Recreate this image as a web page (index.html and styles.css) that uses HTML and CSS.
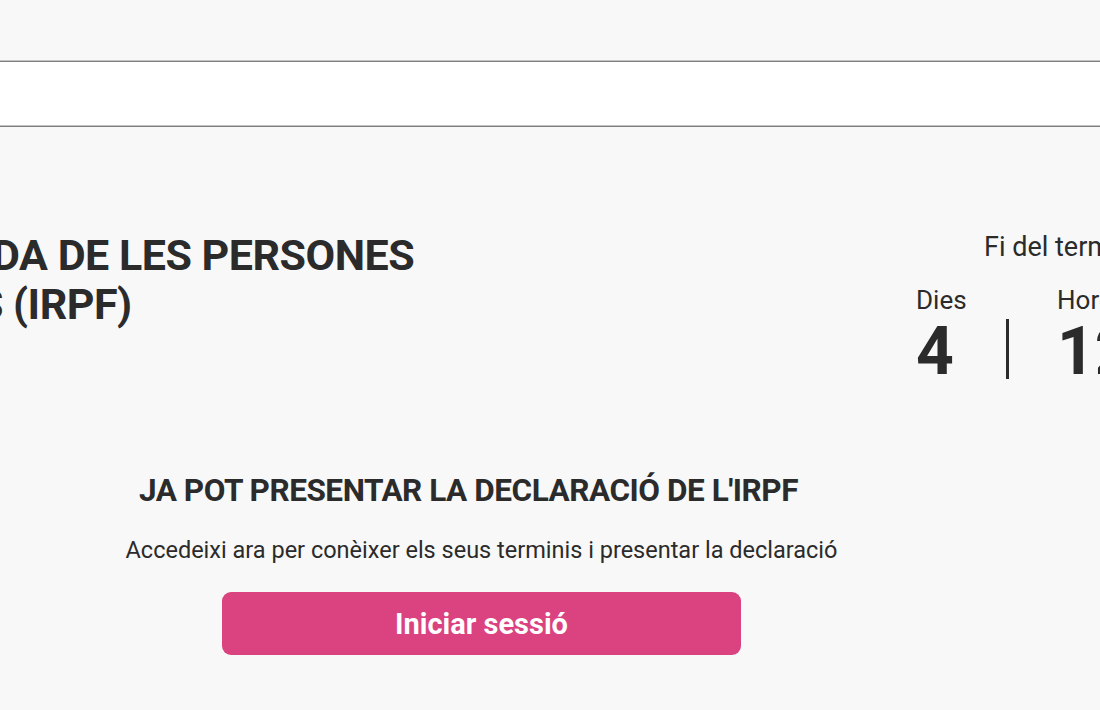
FILE: index.html
```html
<!DOCTYPE html>
<html lang="ca">
<head>
<meta charset="utf-8">
<title>IRPF</title>
<link rel="stylesheet" href="styles.css">
</head>
<body>
<header class="topbar"></header>
<nav class="navband"><div class="navinner"></div></nav>
<main class="stage">
  <section class="hero">
    <h1 class="title">IMPOST SOBRE LA RENDA DE LES PERSONES<br>FÍSIQUES (IRPF)</h1>
    <div class="countdown">
      <div class="cd-head">Fi del termini</div>
      <div class="cd-units">
        <div class="unit"><span class="u-label">Dies</span><span class="u-num">4</span></div>
        <div class="sep"></div>
        <div class="unit"><span class="u-label">Hores</span><span class="u-num">12</span></div>
        <div class="sep"></div>
        <div class="unit"><span class="u-label">Minuts</span><span class="u-num">30</span></div>
      </div>
    </div>
  </section>
  <section class="cta">
    <h2 class="cta-title">JA POT PRESENTAR LA DECLARACIÓ DE L'IRPF</h2>
    <p class="cta-text">Accedeixi ara per conèixer els seus terminis i presentar la declaració</p>
    <a class="btn" href="#">Iniciar sessió</a>
  </section>
</main>
</body>
</html>
```
FILE: styles.css
```css
html, body {
  margin: 0;
  padding: 0;
}
body {
  background: #f8f8f8;
  color: #2b2b2b;
  font-family: Roboto, "Noto Sans", sans-serif;
  overflow: hidden;
  width: 1100px;
  height: 710px;
}
.topbar {
  height: 60px;
}
.navband {
  border-top: 1px solid #c2c2c2;
  border-bottom: 1px solid #7e7e7e;
}
.navinner {
  background: #fff;
  height: 63px;
  border-top: 1px solid #7e7e7e;
  border-bottom: 1px solid #c2c2c2;
}
.stage {
  width: 1763px;
  margin-left: -400px;
}
.hero {
  display: grid;
  grid-template-columns: 1316px 1fr;
  padding-top: 104px;
}
.title {
  margin: 0;
  font-size: 43px;
  line-height: 49px;
  font-weight: 700;
  letter-spacing: -0.5px;
  padding-left: 223px;
  text-indent: -283px;
}
.countdown {
  display: flex;
  flex-direction: column;
}
.cd-head {
  font-size: 27px;
  padding-left: 68px;
  line-height: 32px;
}
.cd-units {
  display: flex;
  margin-top: 22px;
}
.unit {
  display: flex;
  flex-direction: column;
  width: 90px;
}
.u-label {
  font-size: 26px;
  line-height: 30px;
}
.u-num {
  font-size: 66px;
  font-weight: 700;
  line-height: 74px;
}
.sep {
  width: 3px;
  height: 60px;
  background: #2b2b2b;
  margin: 34px 48px 0 0;
}
.cta {
  display: flex;
  flex-direction: column;
  align-items: center;
  margin-top: 83px;
}
.cta-title {
  margin: 0;
  font-size: 31.5px;
  font-weight: 700;
  letter-spacing: -0.45px;
  padding-right: 26px;
}
.cta-text {
  margin: 27px 0 0;
  font-size: 23.5px;
}
.btn {
  margin-top: 28px;
  width: 519px;
  height: 63px;
  border-radius: 9px;
  background: #da4280;
  color: #fff;
  font-size: 29px;
  font-weight: 700;
  text-decoration: none;
  display: flex;
  align-items: center;
  justify-content: center;
}
```
